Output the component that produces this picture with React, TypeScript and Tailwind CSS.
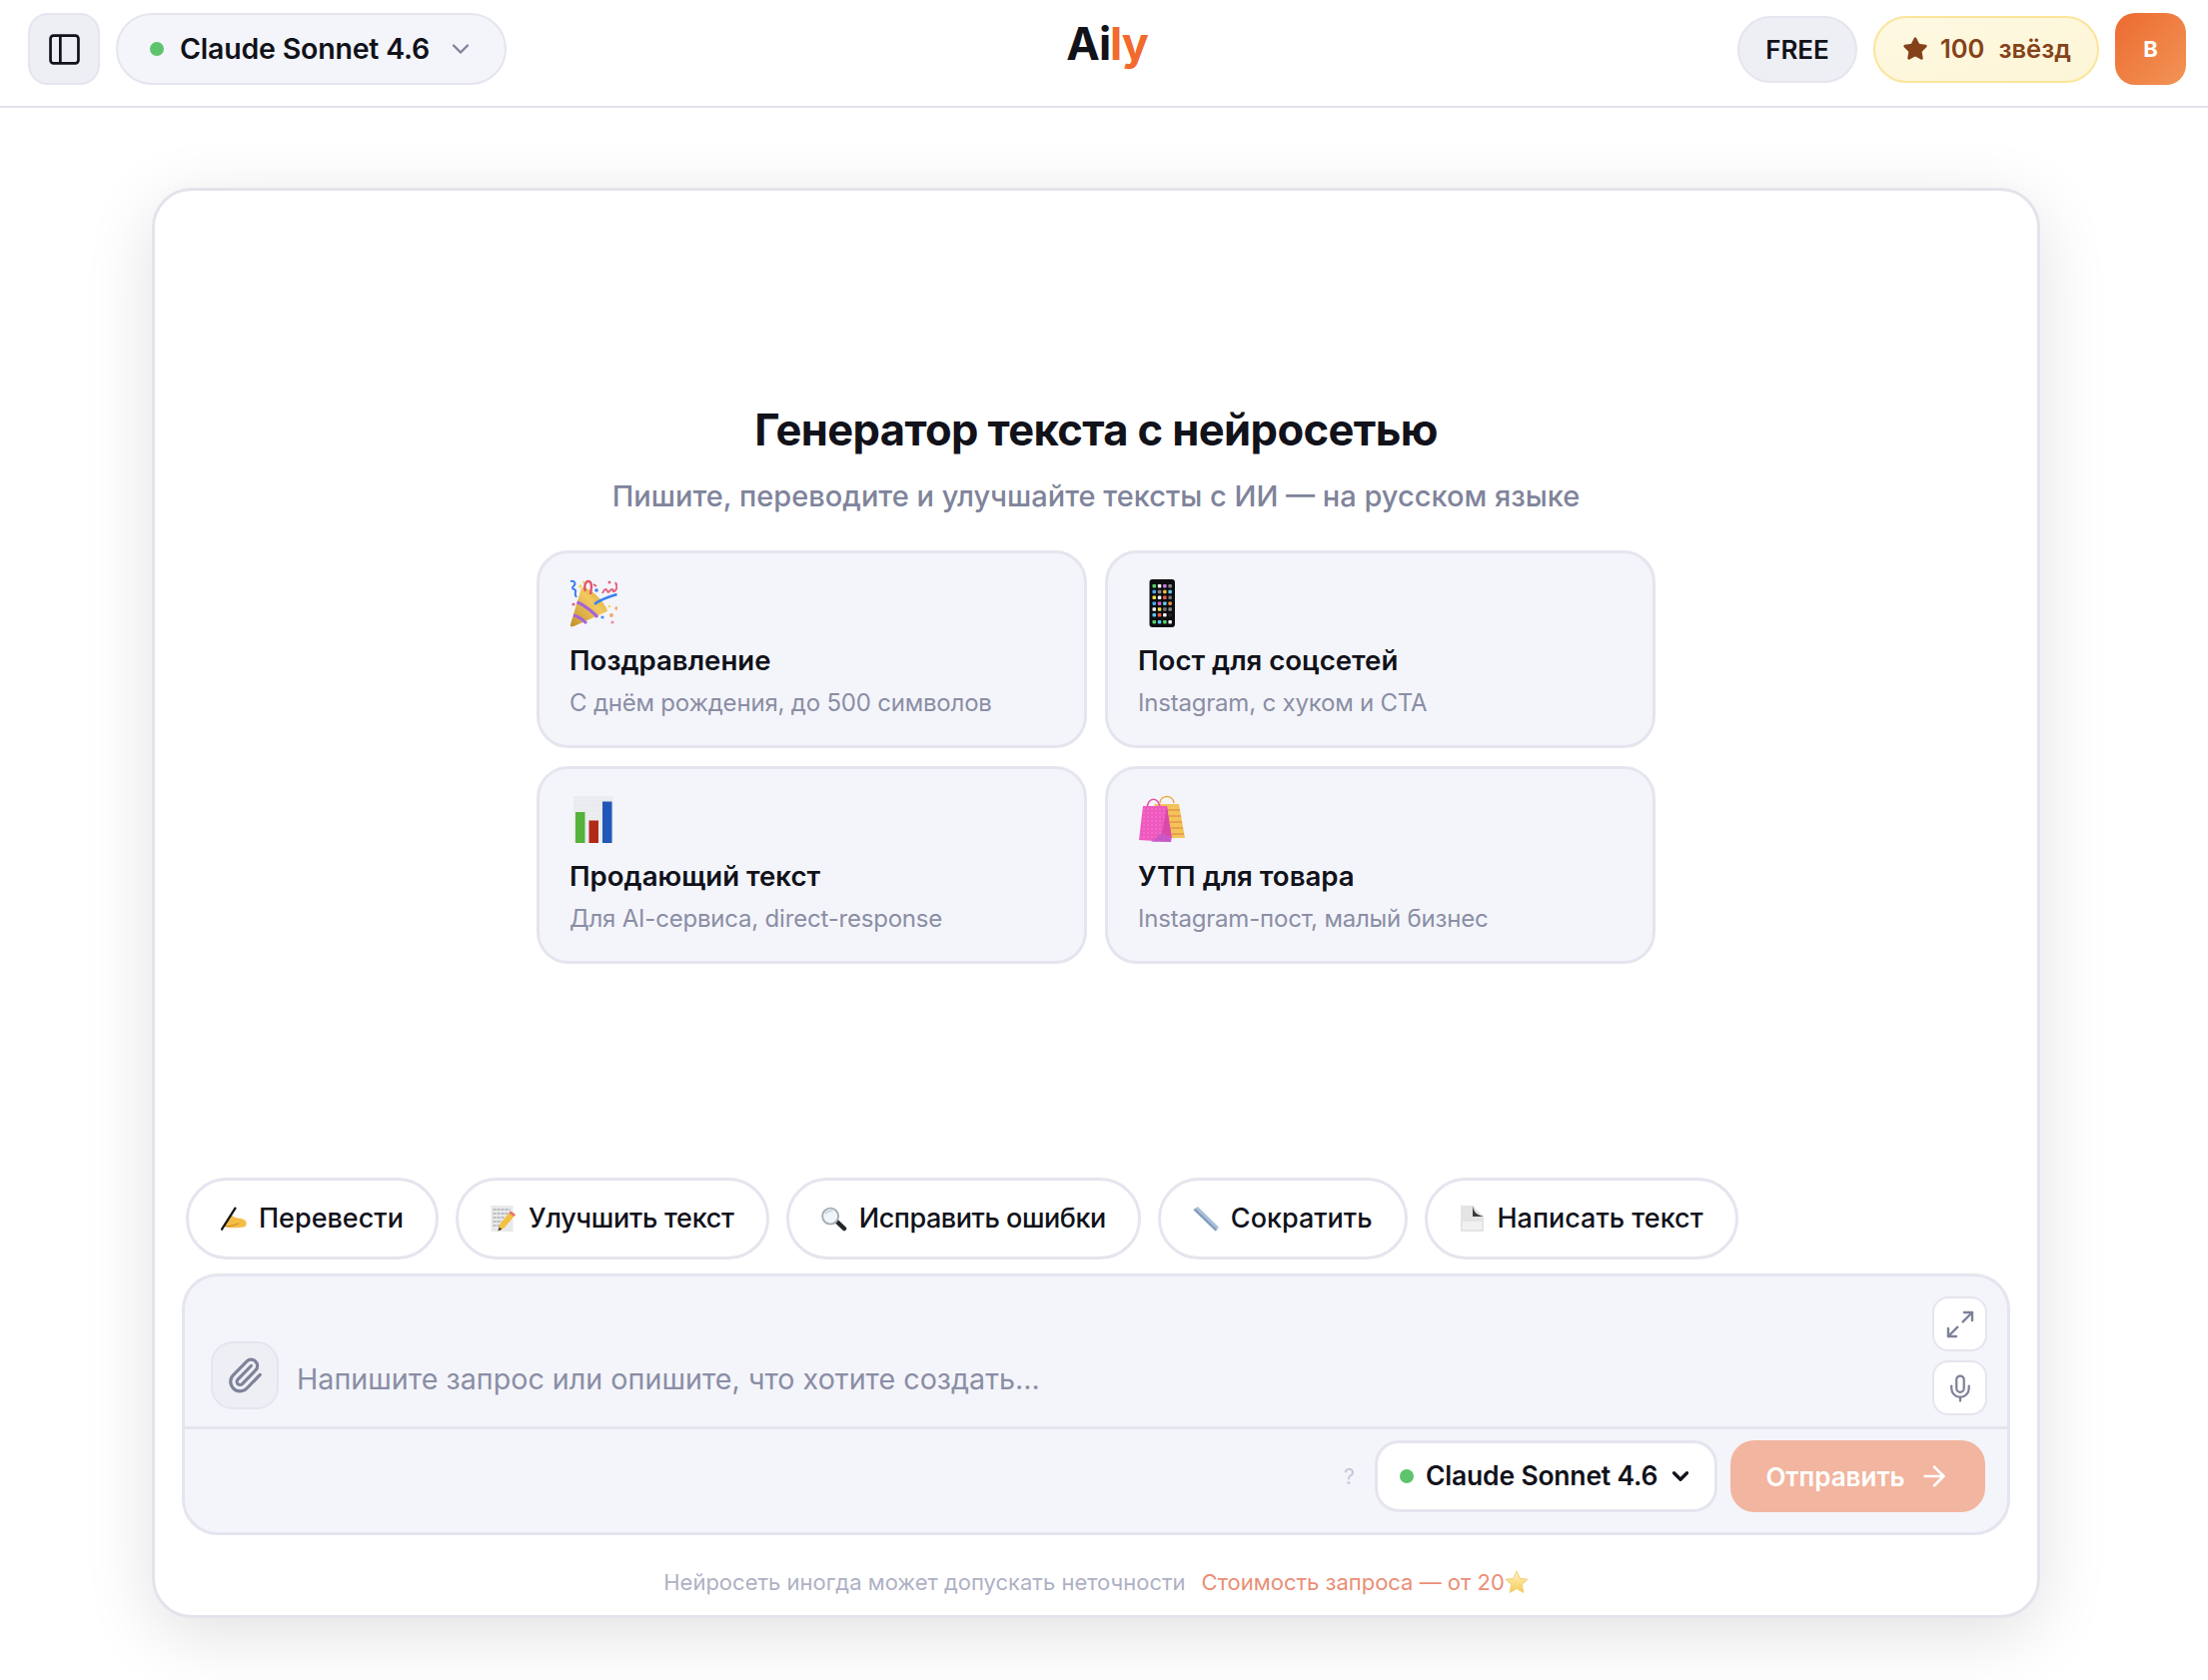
import { ArrowRight, ChevronDown, Maximize2, Mic, Paperclip, Star } from "lucide-react";

function PartyEmoji() {
  return (
    <svg viewBox="0 0 48 48" className="w-12 h-12">
      <defs>
        <linearGradient id="cone" x1="0" y1="1" x2="1" y2="0">
          <stop offset="0" stopColor="#c4902c" />
          <stop offset="0.6" stopColor="#f2c95e" />
          <stop offset="1" stopColor="#d6a238" />
        </linearGradient>
      </defs>
      <path d="M1 45 C0.500 47.500 2 48 4.500 47 L38 32 C37 25 20 6 12 8.500 Z" fill="url(#cone)" />
      <path d="M4 36 C8 37 14 41 17 44" stroke="#a563d8" strokeWidth="3" fill="none" />
      <path d="M7.500 23 C14 25 25 34 28 38" stroke="#a563d8" strokeWidth="3.200" fill="none" />
      <path d="M25 25 C31 20 39 18 47.500 15" stroke="#3b82f0" strokeWidth="2.600" fill="none" />
      <path d="M16 12 C14 7 16 2 19 2 C22 2 22 6 22 8 L21 15" stroke="#e0566f" strokeWidth="2.400" fill="none" />
      <path d="M24 5 L27 7" stroke="#e0566f" strokeWidth="1.600" />
      <path d="M33 14 C35 9 37 9 38 12 C39 15 41 9 43 10 C44 11 43 14 46 11 C48 9 47 5 46 3" stroke="#e5637f" strokeWidth="2" fill="none" />
      <path d="M1 2 C5 1 7 4 4 7 C1 9 5 10 6 11 C7 13 4 14 7 18" stroke="#3b7ff0" strokeWidth="2" fill="none" />
      <circle cx="11" cy="7" r="1.700" fill="#f1d65a" />
      <circle cx="27" cy="11" r="1.800" fill="#3b7ff0" />
      <circle cx="40" cy="3" r="1.500" fill="#e5637f" />
      <circle cx="14" cy="3" r="1.200" fill="#f1d65a" />
      <circle cx="4" cy="25" r="1.600" fill="#e5637f" />
      <circle cx="33" cy="38" r="1.600" fill="#4a8df0" />
      <circle cx="47" cy="29" r="1.800" fill="#f0b060" />
      <circle cx="42" cy="36" r="1.900" fill="#f0a860" />
      <circle cx="43" cy="43" r="1.600" fill="#ef8fa6" />
      <circle cx="40" cy="27" r="1.300" fill="#f1d65a" />
    </svg>
  );
}

function PhoneEmoji() {
  const colors = [
    "#58d36b", "#f4f4f4", "#c77be0", "#888888",
    "#4aa8f0", "#888888", "#f0c040", "#60c8f0",
    "#f4e04a", "#f4f4f4", "#f0604a", "#777777",
    "#4aa8f0", "#e060c0", "#60c8f0", "#f09040",
    "#f4f4f4", "#f4e04a", "#777777", "#888888",
    "#60c8f0", "#f0604a", "#f4f4f4", "#222222",
  ];
  return (
    <svg viewBox="0 0 48 48" className="w-12 h-12">
      <rect x="11.500" y="0" width="25.500" height="48" rx="3" fill="#0d0d10" />
      {colors.map((c, i) => (
        <rect key={i} x={14.5 + (i % 4) * 5.3} y={5 + Math.floor(i / 4) * 5.8} width="3.500" height="3.500" rx="0.800" fill={c} />
      ))}
      {["#58d36b", "#58c8f0", "#58d36b", "#f4f4f4"].map((c, i) => (
        <rect key={i} x={14.5 + i * 5.3} y="41" width="3.500" height="3.500" rx="0.800" fill={c} />
      ))}
    </svg>
  );
}

function ChartEmoji() {
  return (
    <svg viewBox="0 0 48 48" className="w-12 h-12">
      <defs>
        <pattern id="gridp" width="2.500" height="2.500" patternUnits="userSpaceOnUse">
          <path d="M2.500 0H0V2.500" fill="none" stroke="#d4d8de" strokeWidth="0.400" />
        </pattern>
      </defs>
      <rect x="4" y="1" width="40" height="47" fill="#eef0f3" />
      <rect x="4" y="1" width="40" height="47" fill="url(#gridp)" />
      <rect x="6" y="17" width="9.500" height="31" fill="#55b33b" />
      <rect x="19.500" y="25.500" width="9.500" height="22.500" fill="#b02a17" />
      <rect x="33" y="6.500" width="9.500" height="41.500" fill="#2158b8" />
    </svg>
  );
}

function BagsEmoji() {
  return (
    <svg viewBox="0 0 48 48" className="w-12 h-12">
      <defs>
        <pattern id="dots" width="4" height="4" patternUnits="userSpaceOnUse">
          <circle cx="2" cy="2" r="0.500" fill="#f9b5e0" />
        </pattern>
      </defs>
      <path d="M22 8 C22 0 35 -1 36 8" stroke="#eba43a" strokeWidth="1.500" fill="none" />
      <path d="M16 9 H41 L47 43 H28 Z" fill="#f3c35a" />
      <path d="M30 15 H42 M31 21 H43 M32 27 H44 M33 33 H45 M34 39 H46" stroke="#e8a04c" strokeWidth="2.200" />
      <path d="M9 14 C9 1 22 1 22 14" stroke="#e24fa8" strokeWidth="1.500" fill="none" />
      <path d="M5 11 H29 L33 47 L1 45 Z" fill="#ee58bf" />
      <path d="M5 11 H29 L33 47 L1 45 Z" fill="url(#dots)" />
      <path d="M29 11 L34 43 L24 38 Z" fill="#d94aa8" />
      <path d="M24 38 L34 43 L33 47 H13 Z" fill="#b857c6" opacity="0.700" />
    </svg>
  );
}

function HandEmoji() {
  return (
    <svg viewBox="0 0 27 24" className="w-[27px] h-[24px]">
      <path d="M3 20 C4 15 8 13 11 8 C14 11 16 11 21 12 C27 13 28 18 25 20.500 C18 22 10 22 3 20 Z" fill="#f4bd46" />
      <path d="M4 20 C10 21 15 18 19 17" stroke="#c9841a" strokeWidth="1" fill="none" />
      <path d="M0.500 24 L15.500 0.500" stroke="#16161a" strokeWidth="2.400" />
    </svg>
  );
}

function MemoEmoji() {
  return (
    <svg viewBox="0 0 25 26" className="w-[25px] h-[26px]">
      <rect x="0.500" y="0" width="22" height="26" fill="#e9e9ea" />
      <path d="M2.500 4h17M2.500 8h15M2.500 12h12M2.500 16h9M2.500 20h7" stroke="#8d9096" strokeWidth="1" strokeDasharray="3 1" />
      <path d="M7.500 25.500 L9 19 L20 5.500 L25 9 L13.500 22.500 Z" fill="#f3c13f" />
      <path d="M20 5.500 L25 9 L23.300 11 L18.300 7.500 Z" fill="#e8727a" />
      <path d="M7.500 25.500 L8.500 21.500 L11.500 23.700 Z" fill="#4a4038" />
    </svg>
  );
}

function LoupeEmoji() {
  return (
    <svg viewBox="0 0 27 25" className="w-[27px] h-[25px]">
      <path d="M15 14 L24 22.500" stroke="#23262b" strokeWidth="4.500" strokeLinecap="round" />
      <circle cx="9.500" cy="9.500" r="8.300" fill="#eef5fb" stroke="#a6adb5" strokeWidth="2" />
      <path d="M4.500 7 C6 4.500 9 3.500 12 4" stroke="#c5d3df" strokeWidth="1.500" fill="none" />
    </svg>
  );
}

function RulerEmoji() {
  return (
    <svg viewBox="0 0 27 26" className="w-[27px] h-[26px]">
      <path d="M0.500 4 L5 0.500 L27 22 L23.500 26 Z" fill="#a9bfd6" />
      <path d="M0.500 4 L23.500 26 L25 24.500 L2.500 2.500 Z" fill="#7f9cba" />
    </svg>
  );
}

function PageEmoji() {
  return (
    <svg viewBox="0 0 23 26" className="w-[23px] h-[26px]">
      <path d="M0 0 H12 L23 11 V26 H0 Z" fill="#e4e4e4" />
      <path d="M12 0 C13 6 15 9 23 11 L12 11 Z" fill="#3a3a3a" />
      <path d="M2 16 H21 V24 H2 Z" fill="#f1f1f1" />
    </svg>
  );
}

function StarEmoji() {
  return (
    <svg viewBox="0 0 24 24" className="w-6 h-6">
      <defs>
        <linearGradient id="st" x1="0" y1="0" x2="0" y2="1">
          <stop offset="0" stopColor="#fff3c4" />
          <stop offset="1" stopColor="#f8cd54" />
        </linearGradient>
      </defs>
      <path d="M12 1 L15.300 8.300 L23 9.200 L17.300 14.500 L18.900 22.500 L12 18.500 L5.100 22.500 L6.700 14.500 L1 9.200 L8.700 8.300 Z" fill="url(#st)" stroke="#eec766" strokeWidth="0.800" />
    </svg>
  );
}

const prompts = [
  { icon: <PartyEmoji />, title: "Поздравление", desc: "С днём рождения, до 500 символов" },
  { icon: <PhoneEmoji />, title: "Пост для соцсетей", desc: "Instagram, с хуком и CTA" },
  { icon: <ChartEmoji />, title: "Продающий текст", desc: "Для AI-сервиса, direct-response" },
  { icon: <BagsEmoji />, title: "УТП для товара", desc: "Instagram-пост, малый бизнес" },
];

const chips = [
  { icon: <HandEmoji />, label: "Перевести", track: "" },
  { icon: <MemoEmoji />, label: "Улучшить текст", track: "tracking-[-0.3px]" },
  { icon: <LoupeEmoji />, label: "Исправить ошибки", track: "tracking-[-0.45px]" },
  { icon: <RulerEmoji />, label: "Сократить", track: "" },
  { icon: <PageEmoji />, label: "Написать текст", track: "" },
];

export default function App() {
  return (
    <div className="w-[2210px] h-[1682px] bg-white overflow-hidden font-['Inter',sans-serif] text-[#11121a]">
      <header className="h-[108px] border-b-2 border-[#e3e3ec] pl-7 pr-[22px] pt-[13px] grid grid-cols-[1fr_auto_1fr] items-start">
        <div className="flex items-center gap-4">
          <button className="w-[72px] h-[72px] rounded-[20px] bg-[#eeeff5] border-2 border-[#e4e5ee] flex items-center justify-center">
            <svg viewBox="0 0 30 30" className="w-[31px] h-[31px]" fill="none" stroke="#11121a" strokeWidth="2.600">
              <rect x="1.500" y="1.500" width="27" height="27" rx="3" />
              <path d="M11 1.500V28.500" />
            </svg>
          </button>
          <button className="w-[391px] h-[72px] rounded-full bg-[#f4f5fa] border-2 border-[#e4e5ee] flex items-center pl-[32px]">
            <span className="w-[14px] h-[14px] rounded-full bg-[#5ec46c]" />
            <span className="ml-4 text-[28.500px] font-semibold tracking-[-0.2px]">Claude Sonnet 4.6</span>
            <ChevronDown className="ml-[17px] w-[28px] h-[28px] text-[#7e8299]" strokeWidth={2} />
          </button>
        </div>
        <div className="mt-[8px] text-[45px] font-bold leading-none tracking-[-1px]">
          Ai<span className="text-[#f26a2e] font-bold">ly</span>
        </div>
        <div className="flex items-center justify-end gap-[16px]">
          <div className="w-[120px] h-[67px] rounded-full bg-[#eeeff5] border-2 border-[#e4e5ee] flex items-center justify-center text-[26px] font-semibold">
            FREE
          </div>
          <div className="w-[226px] h-[67px] rounded-full bg-gradient-to-br from-[#fef9e3] to-[#fdf5d6] border-2 border-[#fbe59a] flex items-center pl-[27px] text-[#85421a] text-[25.500px] font-semibold">
            <Star className="w-[26px] h-[26px] fill-[#85421a]" strokeWidth={1.5} />
            <span className="ml-[12px]">100</span>
            <span className="ml-[14px]">звёзд</span>
          </div>
          <div className="w-[71px] h-[72px] rounded-[20px] bg-gradient-to-br from-[#ec6a30] to-[#f19455] flex items-center justify-center text-white text-[22px] font-bold">
            В
          </div>
        </div>
      </header>

      <main className="pl-[152px] pr-[168px] pt-[80px]">
        <div className="h-[1432px] rounded-[40px] border-[3px] border-[#e3e3ec] bg-white shadow-[0_16px_70px_rgba(0,0,0,0.12)] flex flex-col px-[27px]">
          <div className="flex-1 flex flex-col items-center justify-center pb-[5px]">
            <h1 className="text-[43.500px] font-bold leading-[60px] tracking-[-0.6px]">Генератор текста с нейросетью</h1>
            <p className="mt-[15px] text-[29px] font-medium leading-[44px] text-[#7f849b]">
              Пишите, переводите и улучшайте тексты с ИИ — на русском языке
            </p>
            <div className="mt-[32px] w-[1120px] grid grid-cols-2 gap-x-[18px] gap-y-[18px]">
              {prompts.map((p) => (
                <div key={p.title} className="h-[198px] rounded-[32px] bg-[#f4f5fa] border-[3px] border-[#e4e5ee] pl-[30px] pt-[26px]">
                  <div className="h-[48px]">{p.icon}</div>
                  <div className="mt-[13px] text-[27.600px] font-semibold leading-[40px]">{p.title}</div>
                  <div className="mt-[3px] text-[24px] tracking-[-0.2px] leading-[40px] text-[#8a8ea5]">{p.desc}</div>
                </div>
              ))}
            </div>
          </div>

          <div className="flex gap-[17px] pl-[4px]">
            {chips.map((c) => (
              <button key={c.label} className={`h-[82px] px-[32px] rounded-full bg-white border-[3px] border-[#e4e5ee] flex items-center gap-[12px] text-[27px] font-medium ${c.track}`}>
                <span className="w-[26px] flex justify-center">{c.icon}</span>
                {c.label}
              </button>
            ))}
          </div>

          <div className="mt-[14px] h-[262px] rounded-[36px] bg-[#f4f5fa] border-[3px] border-[#e4e5ee] flex flex-col">
            <div className="h-[153px] border-b-[3px] border-[#e4e5ee] pl-[26px] pr-[20px] flex items-end pb-[17px]">
              <button className="w-[68px] h-[68px] rounded-[22px] bg-[#eeeff5] border-2 border-[#e4e5ee] flex items-center justify-center">
                <Paperclip className="w-[38px] h-[38px] text-[#7e8299]" strokeWidth={2} />
              </button>
              <div className="ml-[18px] flex-1 text-[28.700px] leading-[40px] text-[#8a8ea5] mb-[10px]">
                Напишите запрос или опишите, что хотите создать...
              </div>
              <div className="flex flex-col gap-[9px] -mb-[6px]">
                <button className="w-[55px] h-[55px] rounded-[16px] bg-white border-2 border-[#e4e5ee] flex items-center justify-center">
                  <Maximize2 className="w-[32px] h-[32px] text-[#7e8299]" strokeWidth={1.8} />
                </button>
                <button className="w-[55px] h-[55px] rounded-[16px] bg-white border-2 border-[#e4e5ee] flex items-center justify-center">
                  <Mic className="w-[30px] h-[30px] text-[#7e8299]" strokeWidth={1.8} />
                </button>
              </div>
            </div>
            <div className="flex-1 flex items-center justify-end pr-[22px] -mt-[2px] pb-[7px]">
              <span className="text-[22px] text-[#c6c9d7] mr-[20px]">?</span>
              <button className="w-[343px] h-[72px] rounded-[24px] bg-white border-[3px] border-[#e4e5ee] flex items-center pl-[22px]">
                <span className="w-[14px] h-[14px] rounded-full bg-[#5ec46c]" />
                <span className="ml-[12px] text-[26.500px] font-semibold tracking-[-0.2px]">Claude Sonnet 4.6</span>
                <ChevronDown className="ml-[10px] w-[26px] h-[26px]" strokeWidth={3} />
              </button>
              <button className="ml-[13px] w-[255px] h-[72px] rounded-[24px] bg-[#f2b5a0] flex items-center justify-center gap-[13px] text-white text-[26px] font-semibold">
                Отправить
                <ArrowRight className="w-[32px] h-[32px]" strokeWidth={2} />
              </button>
            </div>
          </div>

          <div className="h-[80px] flex items-center justify-center text-[22px] pt-[14px]">
            <span className="text-[#aeb1c4]">Нейросеть иногда может допускать неточности</span>
            <span className="ml-[16px] text-[#ea8e76]">Стоимость запроса — от 20</span>
            <StarEmoji />
          </div>
        </div>
      </main>
    </div>
  );
}
